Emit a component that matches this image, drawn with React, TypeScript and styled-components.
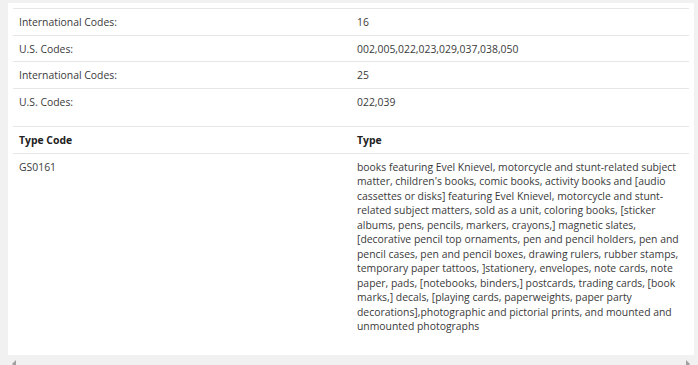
import React from 'react';
import styled, { createGlobalStyle } from 'styled-components';

const GlobalStyle = createGlobalStyle`
  html, body {
    margin: 0;
    padding: 0;
    background: #f1f1f1;
  }
  body {
    font-family: "Open Sans", "Noto Sans", sans-serif;
    color: #3a3a3a;
  }
`;

const Frame = styled.div`
  width: 698px;
  height: 365px;
  display: flex;
  flex-direction: column;
  overflow: hidden;
  background: #f1f1f1;
`;

const Panel = styled.div`
  flex: 1;
  margin: 3px 4px 0 8px;
  background: #fff;
  padding: 5px 5px 0 5px;
  display: flex;
  flex-direction: column;
`;

const Table = styled.table`
  width: 100%;
  border-collapse: collapse;
  table-layout: fixed;
  font-size: 10.4px;
  line-height: 14.5px;
`;

const Cell = styled.td<{ $tall?: boolean; $first?: boolean }>`
  padding: 6px 6px ${p => (p.$tall ? '17px' : '5px')};
  border-top: ${p => (p.$first ? 'none' : '1px solid #e6e6e6')};
  vertical-align: top;
  text-align: left;
`;

const HeadCell = styled.th`
  padding: 6px 6px 5px;
  border-top: 1px solid #e6e6e6;
  border-bottom: 1px solid #e6e6e6;
  text-align: left;
  font-weight: 700;
  color: #222;
`;

const ScrollBar = styled.div`
  height: 10px;
  flex: none;
  background: #f1f1f1;
  display: flex;
  justify-content: space-between;
  align-items: flex-end;
  padding: 0 8px 0 12px;
`;

const Arrow = styled.span<{ $dir: 'left' | 'right' }>`
  width: 0;
  height: 0;
  border-top: 4px solid transparent;
  border-bottom: 4px solid transparent;
  ${p =>
    p.$dir === 'left'
      ? 'border-right: 4px solid #a0a0a0;'
      : 'border-left: 4px solid #a0a0a0;'}
  margin-bottom: -3px;
`;

const codes = [
  { label: 'International Codes:', value: '16' },
  { label: 'U.S. Codes:', value: '002,005,022,023,029,037,038,050' },
  { label: 'International Codes:', value: '25' },
  { label: 'U.S. Codes:', value: '022,039' },
];

const goods =
  "books featuring Evel Knievel, motorcycle and stunt-related subject matter, children's books, comic books, activity books and [audio cassettes or disks] featuring Evel Knievel, motorcycle and stunt-related subject matters, sold as a unit, coloring books, [sticker albums, pens, pencils, markers, crayons,] magnetic slates, [decorative pencil top ornaments, pen and pencil holders, pen and pencil cases, pen and pencil boxes, drawing rulers, rubber stamps, temporary paper tattoos, ]stationery, envelopes, note cards, note paper, pads, [notebooks, binders,] postcards, trading cards, [book marks,] decals, [playing cards, paperweights, paper party decorations],photographic and pictorial prints, and mounted and unmounted photographs";

export default function App() {
  return (
    <>
      <GlobalStyle />
      <Frame>
        <Panel>
          <Table>
            <tbody>
              {codes.map((c, i) => (
                <tr key={i}>
                  <Cell $tall={i === codes.length - 1}>{c.label}</Cell>
                  <Cell $tall={i === codes.length - 1}>{c.value}</Cell>
                </tr>
              ))}
            </tbody>
          </Table>
          <Table>
            <thead>
              <tr>
                <HeadCell>Type Code</HeadCell>
                <HeadCell>Type</HeadCell>
              </tr>
            </thead>
            <tbody>
              <tr>
                <Cell $first>GS0161</Cell>
                <Cell $first>{goods}</Cell>
              </tr>
            </tbody>
          </Table>
        </Panel>
        <ScrollBar>
          <Arrow $dir="left" />
          <Arrow $dir="right" />
        </ScrollBar>
      </Frame>
    </>
  );
}
